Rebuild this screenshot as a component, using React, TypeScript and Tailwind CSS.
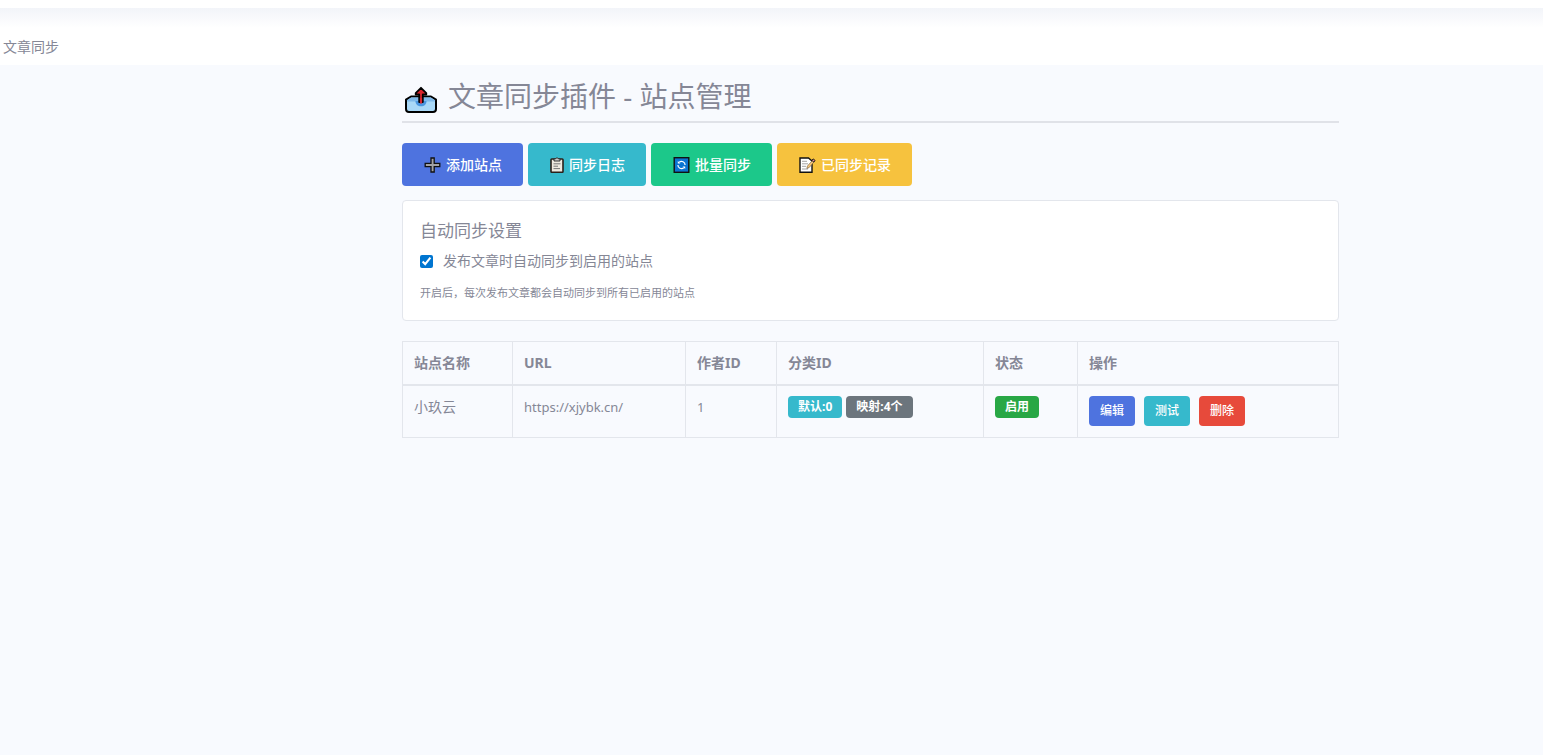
import React, { useState } from "react";

interface Site {
  id: number;
  name: string;
  url: string;
  authorId: number;
  defaultCategory: number;
  mappings: number;
  enabled: boolean;
}

const sites: Site[] = [
  {
    id: 1,
    name: "小玖云",
    url: "https://xjybk.cn/",
    authorId: 1,
    defaultCategory: 0,
    mappings: 4,
    enabled: true,
  },
];

const columns = [
  { label: "站点名称", width: "w-[110px]" },
  { label: "URL", width: "w-[173px]" },
  { label: "作者ID", width: "w-[91px]" },
  { label: "分类ID", width: "w-[207px]" },
  { label: "状态", width: "w-[94px]" },
  { label: "操作", width: "" },
];

const OutboxIcon = () => (
  <svg width="34" height="28" viewBox="0 0 34 28" aria-hidden="true">
    <path
      d="M7 10.500h20l5 3.200v9.300c0 2-1 3-3 3H5c-2 0-3-1-3-3v-9.300z"
      fill="#a9d8f7"
      stroke="#000"
      strokeWidth="2"
      strokeLinejoin="round"
    />
    <path d="M7.300 11.500h19.400l4.300 2.800v1.200H3v-1.200z" fill="#7fb9ea" />
    <path d="M11.500 15h11c0 3.300-2.200 5.300-5.500 5.300S11.500 18.300 11.500 15z" fill="#4a96e0" />
    <path
      d="M17 1.800l5.300 5.400v1.300h-3.500V16h-3.600V8.500h-3.500V7.200z"
      fill="#d9242c"
      stroke="#000"
      strokeWidth="1.800"
      strokeLinejoin="round"
    />
    <path d="M15.900 12h2.200v5.500h-2.200z" fill="#d9242c" />
  </svg>
);

const PlusIcon = () => (
  <svg width="17" height="16" viewBox="0 0 17 16" aria-hidden="true">
    <path
      d="M7 1h3.200v5.400h5.600v3.200h-5.600V15H7V9.600H1.200V6.400H7z"
      fill="#a3a3a5"
      stroke="#111"
      strokeWidth="1.300"
    />
  </svg>
);

const ClipboardIcon = () => (
  <svg width="14" height="16" viewBox="0 0 14 16" aria-hidden="true">
    <rect x="1" y="2" width="12" height="13.300" rx="0.800" fill="#eee9e0" stroke="#2b201a" strokeWidth="1.600" />
    <path d="M4 1.800h1.600a1.500 1.500 0 0 1 2.800 0H10V4H4z" fill="#c9c9c9" stroke="#222" strokeWidth="0.900" />
    <path d="M3.500 6.800h7M3.500 9.200h4.500M3.500 11.600h6.500" stroke="#777" strokeWidth="1" />
  </svg>
);

const RefreshIcon = () => (
  <svg width="17" height="16" viewBox="0 0 17 16" aria-hidden="true">
    <rect x="1.200" y="0.700" width="14.600" height="14.600" fill="#0b74d1" stroke="#111" strokeWidth="1.400" />
    <path
      d="M6.200 5.200A3.600 3.600 0 0 1 12.100 8M10.800 10.800A3.600 3.600 0 0 1 4.900 8"
      fill="none"
      stroke="#fff"
      strokeWidth="1.200"
    />
    <path d="M4.800 4v2.600h2.600zM12.200 12V9.400H9.600z" fill="#fff" />
  </svg>
);

const MemoIcon = () => (
  <svg width="17" height="16" viewBox="0 0 17 16" aria-hidden="true">
    <path d="M1 1h8.500L13 4v11.200H1z" fill="#fff" stroke="#111" strokeWidth="1.400" />
    <path d="M3 4.300h5M3 6.800h6M3 9.300h4M3 12h6" stroke="#9a9a9a" strokeWidth="0.900" />
    <path d="M13.500 3.400l1.700 1.300-5 5.800-2.300 1 .5-2.400z" fill="#f6c77a" stroke="#6b5334" strokeWidth="0.600" />
    <path d="M12.800 3.400l1.300-1.500 2 1.500-1.200 1.700z" fill="#e88a93" stroke="#111" strokeWidth="0.900" />
  </svg>
);

const actions = [
  { label: "添加站点", color: "bg-[#4e73df]", icon: <PlusIcon /> },
  { label: "同步日志", color: "bg-[#36b9cc]", icon: <ClipboardIcon /> },
  { label: "批量同步", color: "bg-[#1cc88a]", icon: <RefreshIcon /> },
  { label: "已同步记录", color: "bg-[#f6c23e]", icon: <MemoIcon /> },
];

const rowActions = [
  { label: "编辑", color: "bg-[#4e73df]" },
  { label: "测试", color: "bg-[#36b9cc]" },
  { label: "删除", color: "bg-[#e74a3b]" },
];

const App = () => {
  const [autoSync, setAutoSync] = useState(true);

  return (
    <div className="min-h-screen bg-[#f8fafe] font-['Noto_Sans','Noto_Sans_CJK_SC',sans-serif] text-sm text-[#858796]">
      <header className="bg-white pt-2">
        <div className="h-5 bg-gradient-to-b from-[#f2f4f9] to-white" />
        <div className="flex h-[37px] items-center px-[3px]">文章同步</div>
      </header>

      <main className="pl-[198px]">
        <div className="mx-auto w-full max-w-[937px] pt-3">
          <h1 className="flex h-[46px] items-start gap-[10px] border-b-2 border-[#e0e2e8] pl-[2px] text-[28px] leading-[38px] font-normal">
            <span className="pt-[9px]">
              <OutboxIcon />
            </span>
            文章同步插件 - 站点管理
          </h1>

          <div className="mt-5 flex flex-wrap gap-[5px]">
            {actions.map((action) => (
              <button
                key={action.label}
                type="button"
                className={`flex h-[43px] items-center gap-[5px] rounded px-[21px] font-medium text-white ${action.color}`}
              >
                <span className="-mr-px pl-px">{action.icon}</span>
                <span className="pl-px">{action.label}</span>
              </button>
            ))}
          </div>

          {/* 自动同步 */}
          <section className="mt-[14px] rounded border border-[#e3e6ec] bg-white px-[17px] pt-[18px] pb-[17px]">
            <h2 className="text-[17px] leading-6">自动同步设置</h2>
            <label className="mt-2 flex items-center gap-[10px] leading-5">
              <input
                type="checkbox"
                checked={autoSync}
                onChange={(e) => setAutoSync(e.target.checked)}
                className="size-[13px] accent-[#0075d0]"
              />
              发布文章时自动同步到启用的站点
            </label>
            <p className="mt-3 text-[11px] leading-5">
              开启后，每次发布文章都会自动同步到所有已启用的站点
            </p>
          </section>

          {/* 站点列表 */}
          <table className="mt-5 w-full table-fixed border-collapse border border-[#e3e6ec] text-left">
            <thead>
              <tr>
                {columns.map((column) => (
                  <th
                    key={column.label}
                    className={`h-[43px] border border-b-2 border-[#e3e6ec] px-[11px] font-bold ${column.width}`}
                  >
                    {column.label}
                  </th>
                ))}
              </tr>
            </thead>
            <tbody>
              {sites.map((site) => (
                <tr key={site.id} className="h-[53px] align-top leading-[22px]">
                  <td className="border border-[#e3e6ec] px-[11px] py-[10px]">{site.name}</td>
                  <td className="border border-[#e3e6ec] px-[11px] py-[10px] text-[13px]">{site.url}</td>
                  <td className="border border-[#e3e6ec] px-[11px] py-[10px] text-[13px]">{site.authorId}</td>
                  <td className="border border-[#e3e6ec] px-[11px] py-[10px]">
                    <div className="flex gap-1 text-xs leading-[22px] font-bold text-white">
                      <span className="rounded bg-[#36b9cc] px-[10px]">
                        默认:{site.defaultCategory}
                      </span>
                      <span className="rounded bg-[#6c757d] px-[10px]">
                        映射:{site.mappings}个
                      </span>
                    </div>
                  </td>
                  <td className="border border-[#e3e6ec] px-[11px] py-[10px]">
                    <div className="flex text-xs leading-[22px] font-bold text-white">
                      <span
                        className={`rounded px-[10px] ${site.enabled ? "bg-[#28a745]" : "bg-[#6c757d]"}`}
                      >
                        {site.enabled ? "启用" : "禁用"}
                      </span>
                    </div>
                  </td>
                  <td className="border border-[#e3e6ec] px-[11px] py-[10px]">
                    <div className="flex gap-[9px]">
                      {rowActions.map((action) => (
                        <button
                          key={action.label}
                          type="button"
                          className={`h-[30px] rounded px-[11px] text-xs font-medium text-white ${action.color}`}
                        >
                          {action.label}
                        </button>
                      ))}
                    </div>
                  </td>
                </tr>
              ))}
            </tbody>
          </table>
        </div>
      </main>
    </div>
  );
};

export default App;
